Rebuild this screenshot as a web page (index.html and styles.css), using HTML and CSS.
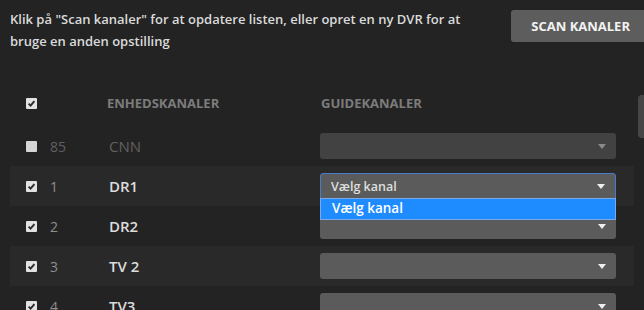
FILE: index.html
```html
<!DOCTYPE html>
<html lang="da">
<head>
  <meta charset="UTF-8">
  <meta name="viewport" content="width=device-width, initial-scale=1.0">
  <title>Kanaler</title>
  <link rel="stylesheet" href="styles.css">
</head>
<body>
  <div class="page">
    <div class="intro">
      <p>Klik på "Scan kanaler" for at opdatere listen, eller opret en ny DVR for at bruge en anden opstilling</p>
      <button type="button" class="scan-btn">Scan kanaler</button>
    </div>

    <div class="channels">
      <div class="row head">
        <span class="check on"><svg viewBox="0 0 11 11"><path d="M2.6 5.6 L4.6 7.6 L8.4 3.2"/></svg></span>
        <span></span>
        <span class="label">Enhedskanaler</span>
        <span class="label">Guidekanaler</span>
      </div>

      <div class="row off">
        <span class="check"></span>
        <span class="num">85</span>
        <span class="name">CNN</span>
        <div class="select disabled"><span></span><i class="arrow"></i></div>
      </div>

      <div class="row stripe">
        <span class="check on"><svg viewBox="0 0 11 11"><path d="M2.6 5.6 L4.6 7.6 L8.4 3.2"/></svg></span>
        <span class="num">1</span>
        <span class="name">DR1</span>
        <div class="select-wrap">
          <div class="select open"><span>Vælg kanal</span><i class="arrow"></i></div>
          <ul class="options">
            <li class="selected">Vælg kanal</li>
          </ul>
        </div>
      </div>

      <div class="row">
        <span class="check on"><svg viewBox="0 0 11 11"><path d="M2.6 5.6 L4.6 7.6 L8.4 3.2"/></svg></span>
        <span class="num">2</span>
        <span class="name">DR2</span>
        <div class="select"><span></span><i class="arrow"></i></div>
      </div>

      <div class="row stripe">
        <span class="check on"><svg viewBox="0 0 11 11"><path d="M2.6 5.6 L4.6 7.6 L8.4 3.2"/></svg></span>
        <span class="num">3</span>
        <span class="name">TV 2</span>
        <div class="select"><span></span><i class="arrow"></i></div>
      </div>

      <div class="row">
        <span class="check on"><svg viewBox="0 0 11 11"><path d="M2.6 5.6 L4.6 7.6 L8.4 3.2"/></svg></span>
        <span class="num">4</span>
        <span class="name">TV3</span>
        <div class="select"><span></span><i class="arrow"></i></div>
      </div>
    </div>

    <div class="scroll-thumb"></div>
  </div>
</body>
</html>
```

FILE: styles.css
```css
html, body {
  margin: 0;
  padding: 0;
  overflow: hidden;
}

body {
  font-family: 'Open Sans', 'Noto Sans', sans-serif;
  background-color: #232323;
  color: #ddd;
}

.page {
  position: relative;
  padding: 0 10px;
}

.intro {
  display: flex;
  justify-content: space-between;
  align-items: flex-start;
  height: 80px;
}

.intro p {
  margin: 0;
  padding-top: 8px;
  max-width: 480px;
  font-size: 13px;
  font-weight: 600;
  line-height: 22px;
  color: #dadada;
}

.scan-btn {
  margin-top: 10px;
  margin-right: -16px;
  height: 32px;
  padding: 0 20px;
  border: none;
  border-radius: 3px;
  background-color: #5d5d5d;
  color: #f2f2f2;
  font-family: inherit;
  font-size: 13px;
  font-weight: 700;
  text-transform: uppercase;
  white-space: nowrap;
}

.row {
  display: grid;
  grid-template-columns: 24px 59px 211px 296px;
  align-items: center;
  height: 40px;
  padding: 0 14px 0 16px;
}

.row.head {
  height: 46px;
}

.row.stripe {
  background-color: #292929;
}

.check {
  display: block;
  width: 11px;
  height: 11px;
  border-radius: 1px;
  background-color: #e2e2e2;
}

.check svg {
  display: block;
  width: 11px;
  height: 11px;
}

.check path {
  fill: none;
  stroke: #2a2a2a;
  stroke-width: 1.9;
}

.row.off .check {
  background-color: #d6d6d6;
}

.label {
  font-size: 13px;
  font-weight: 700;
  color: #7c7c7c;
  text-transform: uppercase;
  margin-left: -2px;
}

.label + .label {
  margin-left: 1px;
}

.num {
  font-size: 14px;
  color: #8e8e8e;
}

.name {
  font-size: 15px;
  font-weight: 600;
  color: #dcdcdc;
}

.row.off .num,
.row.off .name {
  color: #606060;
  font-weight: 400;
}

.select-wrap {
  position: relative;
}

.select {
  display: flex;
  align-items: center;
  justify-content: space-between;
  box-sizing: border-box;
  height: 26px;
  padding: 0 10px 0 11px;
  border-radius: 3px;
  background-color: #5b5b5b;
  font-size: 12.5px;
  font-weight: 600;
  color: #dedede;
}

.select.disabled {
  background-color: #424242;
}

.select.open {
  border: 1px solid #4a7bc9;
  border-radius: 3px 3px 0 0;
  padding-left: 10px;
}

.arrow {
  width: 0;
  height: 0;
  border-left: 4px solid transparent;
  border-right: 4px solid transparent;
  border-top: 5px solid #efefef;
}

.select.disabled .arrow {
  border-top-color: #8a8a8a;
}

.options {
  position: absolute;
  top: 25px;
  left: 0;
  right: 0;
  margin: 0;
  padding: 0;
  list-style: none;
  z-index: 2;
}

.options li {
  box-sizing: border-box;
  height: 22px;
  padding-left: 11px;
  border: 1px solid #7aa9ea;
  background-color: #1e8cff;
  color: #fff;
  font-size: 13.5px;
  font-weight: 600;
  line-height: 19px;
}

.scroll-thumb {
  position: absolute;
  top: 95px;
  right: -4px;
  width: 10px;
  height: 43px;
  border-radius: 4px;
  background-color: #464646;
}
```
